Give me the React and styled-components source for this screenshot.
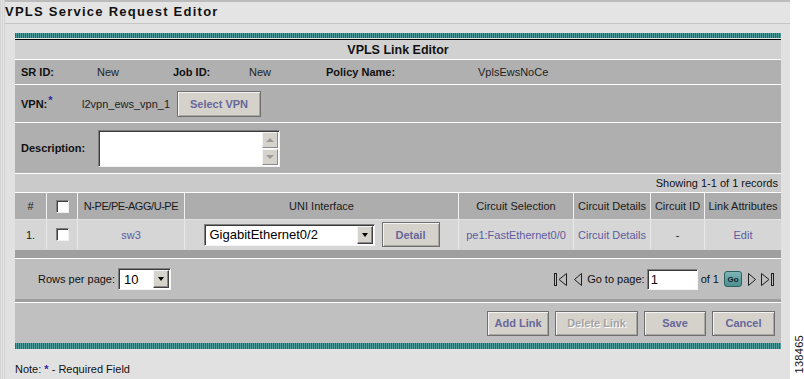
import React from 'react'
import styled, { createGlobalStyle } from 'styled-components';

const Global = createGlobalStyle`
  * { box-sizing: border-box; }
  html, body {
    margin: 0;
    padding: 0;
    width: 804px;
    height: 379px;
    overflow: hidden;
    background: #fff;
    font-family: "Liberation Sans", Arial, sans-serif;
    font-size: 11px;
    color: #111;
  }
`;

const COLS = '31px 31px 107px 274px 115px 77px 54px 77px';

const Frame = styled.div`
  display: flex;
  width: 804px;
  height: 379px;
  overflow: hidden;
`;

const Rail = styled.div`
  width: 5px;
  background: repeating-linear-gradient(90deg, #d2d2d2 0 1px, #e6e6e6 1px 2px);
`;

const Main = styled.div`
  width: 785px;
  display: flex;
  flex-direction: column;
  background: #e1e1e1;
`;

const TitleBar = styled.div`
  height: 24px;
  border-top: 2px solid #bcbcbc;
  border-bottom: 1px solid #c6c6c6;
  background: #e4e4e4;
  font-weight: bold;
  font-size: 13px;
  letter-spacing: 1.25px;
  line-height: 20px;
  color: #111;
`;

const Content = styled.div`
  padding: 9px 9px 0 10px;
`;

const Panel = styled.div`
  display: flex;
  flex-direction: column;
  width: 766px;
`;

const TealBar = styled.div`
  height: ${p => p.$h}px;
  background: repeating-linear-gradient(90deg, #256d6d 0 1px, #4f9b9b 1px 2px);
`;

const HeadRule = styled.div`
  height: 2px;
  border-top: 1px solid #e8e8e8;
  border-bottom: 1px solid #000;
`;

const Row = styled.div`
  height: ${p => p.$h}px;
  background: ${p => p.$bg};
  border-bottom: ${p => (p.$line ? `1px solid ${p.$line}` : 'none')};
  display: flex;
  align-items: center;
  padding: ${p => p.$pad || '0'};
  justify-content: ${p => p.$justify || 'flex-start'};
`;

const PanelTitle = styled.div`
  font-weight: bold;
  font-size: 12.5px;
  width: 100%;
  text-align: center;
`;

const InfoGrid = styled.div`
  display: grid;
  grid-template-columns: 76px 76px 76px 77px 152px 1fr;
  align-items: center;
  padding-left: 6px;
  width: 100%;
`;

const Label = styled.span`
  font-weight: bold;
  color: #111;
  width: ${p => (p.$w ? `${p.$w}px` : 'auto')};
`;

const Value = styled.span`
  color: #222;
  width: ${p => (p.$w ? `${p.$w}px` : 'auto')};
`;

const Star = styled.sup`
  color: #2b2b9c;
  font-weight: bold;
  font-size: 11px;
  vertical-align: 4px;
  line-height: 0;
  margin-left: 1px;
`;

const FieldLine = styled.div`
  display: flex;
  align-items: center;
  padding-left: 6px;
`;

const Button = styled.button`
  height: ${p => p.$h || 25}px;
  width: ${p => p.$w}px;
  padding: 0;
  background: #d5d2cb;
  border: 1px solid #6f6f6f;
  box-shadow: inset 1px 1px 0 #f4f4f4, inset -1px -1px 0 #a8a6a0;
  font-family: "Liberation Sans", Arial, sans-serif;
  font-weight: bold;
  font-size: 11px;
  color: ${p => (p.$disabled ? '#a3a3a3' : '#67679a')};
  text-shadow: ${p => (p.$disabled ? '1px 1px 0 #fff' : 'none')};
`;

const DescBox = styled.div`
  display: flex;
  width: 182px;
  height: 37px;
  background: #fff;
  border: 1px solid;
  border-color: #7c7c7c #f2f2f2 #f2f2f2 #7c7c7c;
  box-shadow: inset 1px 1px 0 #3c3c3c;
  margin-left: 13px;
  padding: 1px 1px 1px 0;
`;

const DescText = styled.div`
  flex: 1;
`;

const ScrollCol = styled.div`
  display: flex;
  flex-direction: column;
  width: 16px;
  gap: 1px;
`;

const ScrollBtn = styled.div`
  flex: 1;
  background: #d6d3cc;
  border: 1px solid;
  border-color: #f4f4f4 #8a8a8a #8a8a8a #f4f4f4;
  display: flex;
  align-items: center;
  justify-content: center;

  &::after {
    content: '';
    border-left: 4px solid transparent;
    border-right: 4px solid transparent;
    ${p => (p.$up ? 'border-bottom: 4px solid #9a9a9a;' : 'border-top: 4px solid #9a9a9a;')}
  }
`;

const Showing = styled.span`
  color: #111;
`;

const Grid = styled.div`
  display: grid;
  grid-template-columns: ${COLS};
  height: ${p => p.$h}px;
  background: ${p => p.$bg};
  border-bottom: 1px solid ${p => p.$line};
`;

const Cell = styled.div`
  display: flex;
  align-items: center;
  justify-content: center;
  gap: 7px;
  border-left: 1px solid ${p => p.$sep};
  color: #1a1a1a;
  white-space: nowrap;
  letter-spacing: ${p => (p.$tight ? '-0.45px' : 'normal')};

  &:first-child {
    border-left: 0;
  }
`;

const Link = styled.span`
  color: #5c5c9e;
`;

const Check = styled.span`
  display: inline-block;
  width: 13px;
  height: 13px;
  background: #fff;
  border: 1px solid;
  border-color: #808080 #f0f0f0 #f0f0f0 #808080;
  box-shadow: inset 1px 1px 0 #404040;
`;

const Select = styled.div`
  display: flex;
  align-items: center;
  width: ${p => p.$w}px;
  height: 22px;
  background: #fff;
  border: 1px solid;
  border-color: #808080 #f4f4f4 #f4f4f4 #808080;
  box-shadow: inset 1px 1px 0 #3a3a3a;
  padding: 1px 1px 1px 5px;
  font-size: 13px;
  color: #000;
`;

const SelectText = styled.span`
  flex: 1;
`;

const Arrow = styled.span`
  width: 16px;
  height: 18px;
  background: #d6d3cc;
  border: 1px solid;
  border-color: #f4f4f4 #404040 #404040 #f4f4f4;
  box-shadow: inset -1px -1px 0 #8a8a8a;
  display: flex;
  align-items: center;
  justify-content: center;

  &::after {
    content: '';
    border-left: 3.5px solid transparent;
    border-right: 3.5px solid transparent;
    border-top: 4px solid #000;
  }
`;

const Pager = styled.div`
  display: flex;
  align-items: center;
  justify-content: space-between;
  width: 100%;
  padding: 0 6px 0 23px;
`;

const Group = styled.div`
  display: flex;
  align-items: center;
  gap: ${p => p.$gap || 0}px;
`;

const Spacer = styled.span`
  width: ${p => p.$w}px;
`;

const PageInput = styled.div`
  width: 51px;
  height: 21px;
  background: #fff;
  border: 1px solid;
  border-color: #808080 #f4f4f4 #f4f4f4 #808080;
  box-shadow: inset 1px 1px 0 #3a3a3a;
  padding: 1px 3px;
  font-size: 13px;
  line-height: 17px;
  margin: 0 3px 0 2px;
`;

const GoButton = styled.span`
  width: 18px;
  height: 16px;
  border-radius: 3px;
  background: linear-gradient(#7fb5b5, #4c8e8e);
  border: 1px solid #2d6262;
  font-size: 8px;
  font-weight: bold;
  color: #123;
  display: flex;
  align-items: center;
  justify-content: center;
  margin: 0 5px;
`;

const Bar = styled.div`
  height: ${p => p.$h}px;
  background: #9f9f9f;
  border-bottom: 1px solid #fff;
`;

const Actions = styled.div`
  display: flex;
  gap: 6px;
  width: 100%;
  justify-content: flex-end;
  padding-right: 6px;
`;

const Note = styled.div`
  margin-top: 14px;
  color: #111;
`;

const NoteStar = styled.span`
  color: #2b2b9c;
  font-weight: bold;
`;

const Side = styled.div`
  width: 14px;
  display: flex;
  flex-direction: column;
  justify-content: flex-end;
  align-items: center;
  padding: 0 0 5px 4px;
  background: #fff;
`;

const FigNo = styled.span`
  writing-mode: vertical-rl;
  transform: rotate(180deg);
  font-size: 11px;
  color: #111;
  letter-spacing: 0.3px;
`;

function Nav({ dir, end }) {
  const w = end ? 15 : 10;
  const flip = dir === 'right' ? `scale(-1,1) translate(-${w},0)` : undefined;
  return (
    <svg width={w} height="16" viewBox={`0 0 ${w} 16`}>
      <g transform={flip} fill="none" stroke="#1e1e1e" strokeWidth="1">
        {end && <rect x="1.5" y="2.5" width="2" height="12" />}
        <polygon points={end ? '13.5,2.5 6,8.5 13.5,14.5' : '8.5,2.5 1.5,8.5 8.5,14.5'} />
      </g>
    </svg>
  );
}

const headers = ['#', null, 'N-PE/PE-AGG/U-PE', 'UNI Interface', 'Circuit Selection', 'Circuit Details', 'Circuit ID', 'Link Attributes'];

export default function App() {
  return (
    <Frame>
      <Global />
      <Rail />
      <Main>
        <TitleBar>VPLS Service Request Editor</TitleBar>
        <Content>
          <Panel>
            <TealBar $h={5} />
            <HeadRule />
            <Row $h={20} $bg="#d1d1d1" $line="#fff">
              <PanelTitle>VPLS Link Editor</PanelTitle>
            </Row>
            <Row $h={25} $bg="#b0b0b0" $line="#fff">
              <InfoGrid>
                <Label>SR ID:</Label>
                <Value>New</Value>
                <Label>Job ID:</Label>
                <Value>New</Value>
                <Label>Policy Name:</Label>
                <Value>VplsEwsNoCe</Value>
              </InfoGrid>
            </Row>
            <Row $h={38} $bg="#afafaf" $line="#fff">
              <FieldLine>
                <Label $w={61}>VPN:<Star>*</Star></Label>
                <Value $w={95}>l2vpn_ews_vpn_1</Value>
                <Button $w={84} $h={26}>Select VPN</Button>
              </FieldLine>
            </Row>
            <Row $h={51} $bg="#afafaf" $line="#fff">
              <FieldLine>
                <Label>Description:</Label>
                <DescBox>
                  <DescText />
                  <ScrollCol>
                    <ScrollBtn $up />
                    <ScrollBtn />
                  </ScrollCol>
                </DescBox>
              </FieldLine>
            </Row>
            <Row $h={19} $bg="#cacaca" $line="#fff" $justify="flex-end" $pad="0 3px 0 0">
              <Showing>Showing 1-1 of 1 records</Showing>
            </Row>
            <Grid $h={27} $bg="#adadad" $line="#e2e2e2">
              {headers.map((h, i) => (
                <Cell key={i} $sep="#f2f2f2" $tight={i === 2}>{h === null ? <Check /> : h}</Cell>
              ))}
            </Grid>
            <Grid $h={30} $bg="#d6d6d6" $line="#d6d6d6">
              <Cell $sep="#e9e9e9">1.</Cell>
              <Cell $sep="#e9e9e9"><Check /></Cell>
              <Cell $sep="#e9e9e9"><Link>sw3</Link></Cell>
              <Cell $sep="#e9e9e9">
                <Select $w={171}>
                  <SelectText>GigabitEthernet0/2</SelectText>
                  <Arrow />
                </Select>
                <Button $w={58} $h={25}>Detail</Button>
              </Cell>
              <Cell $sep="#e9e9e9"><Link>pe1:FastEthernet0/0</Link></Cell>
              <Cell $sep="#e9e9e9"><Link>Circuit Details</Link></Cell>
              <Cell $sep="#e9e9e9">-</Cell>
              <Cell $sep="#e9e9e9"><Link>Edit</Link></Cell>
            </Grid>
            <Bar $h={9} />
            <Row $h={40} $bg="#bebebe">
              <Pager>
                <Group $gap={3}>
                  <span>Rows per page:</span>
                  <Select $w={53}>
                    <SelectText>10</SelectText>
                    <Arrow />
                  </Select>
                </Group>
                <Group>
                  <Nav end />
                  <Spacer $w={5} />
                  <Nav />
                  <Spacer $w={4} />
                  <span>Go to page:</span>
                  <PageInput>1</PageInput>
                  <span>of 1</span>
                  <GoButton>Go</GoButton>
                  <Nav dir="right" />
                  <Spacer $w={3} />
                  <Nav dir="right" end />
                </Group>
              </Pager>
            </Row>
            <Bar $h={4} />
            <Row $h={40} $bg="#c0c0c0">
              <Actions>
                <Button $w={62}>Add Link</Button>
                <Button $w={83} $disabled>Delete Link</Button>
                <Button $w={62}>Save</Button>
                <Button $w={63}>Cancel</Button>
              </Actions>
            </Row>
            <TealBar $h={6} />
          </Panel>
          <Note>Note: <NoteStar>*</NoteStar> - Required Field</Note>
        </Content>
      </Main>
      <Side>
        <FigNo>138465</FigNo>
      </Side>
    </Frame>
  );
}
